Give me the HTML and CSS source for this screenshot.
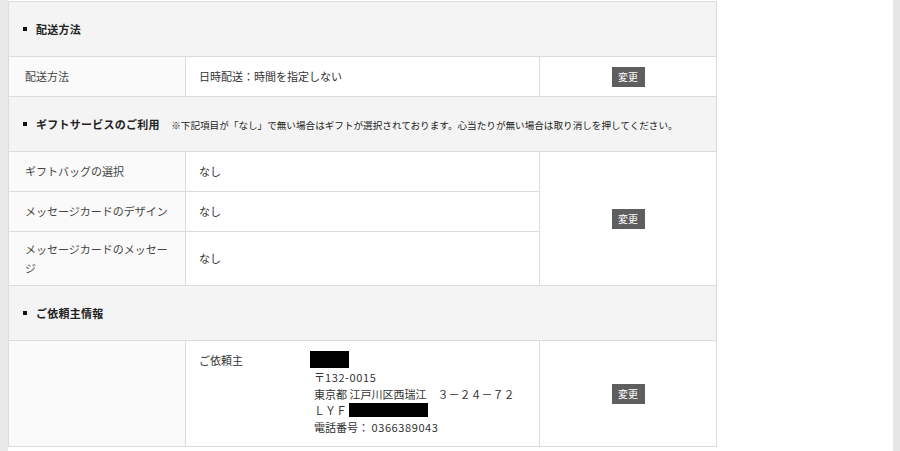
FILE: index.html
```html
<!DOCTYPE html>
<html lang="ja">
<head>
    <meta charset="UTF-8">
    <meta name="viewport" content="width=device-width, initial-scale=1.0">
    <title>ご注文内容の確認</title>
    <link rel="stylesheet" href="styles.css">
</head>
<body>
    <div class="page">
        <div class="side-left"></div>

        <div class="main">
            <table class="order-table">
                <colgroup>
                    <col class="col-label">
                    <col class="col-value">
                    <col class="col-action">
                </colgroup>

                <tr class="section-row">
                    <th colspan="3"><span class="section-title">配送方法</span></th>
                </tr>
                <tr class="item-row">
                    <td class="label">配送方法</td>
                    <td class="value">日時配送：時間を指定しない</td>
                    <td class="action"><a href="#" class="change-btn">変更</a></td>
                </tr>

                <tr class="section-row">
                    <th colspan="3">
                        <span class="section-title">ギフトサービスのご利用</span>
                        <span class="section-note">※下記項目が「なし」で無い場合はギフトが選択されております。心当たりが無い場合は取り消しを押してください。</span>
                    </th>
                </tr>
                <tr class="item-row">
                    <td class="label">ギフトバッグの選択</td>
                    <td class="value">なし</td>
                    <td class="action" rowspan="3"><a href="#" class="change-btn">変更</a></td>
                </tr>
                <tr class="item-row">
                    <td class="label">メッセージカードのデザイン</td>
                    <td class="value">なし</td>
                </tr>
                <tr class="item-row tall">
                    <td class="label">メッセージカードのメッセージ</td>
                    <td class="value">なし</td>
                </tr>

                <tr class="section-row">
                    <th colspan="3"><span class="section-title">ご依頼主情報</span></th>
                </tr>
                <tr class="item-row sender-row">
                    <td class="label"></td>
                    <td class="value">
                        <div class="sender">
                            <div class="sender-label">ご依頼主</div>
                            <div class="sender-info">
                                <div class="redact name-redact"></div>
                                <div class="addr">〒<span class="num">132-0015</span></div>
                                <div class="addr">東京都 江戸川区西瑞江　３－２４－７２</div>
                                <div class="addr">ＬＹＦ <span class="redact building-redact"></span></div>
                                <div class="addr">電話番号： <span class="num">0366389043</span></div>
                            </div>
                        </div>
                    </td>
                    <td class="action"><a href="#" class="change-btn">変更</a></td>
                </tr>
            </table>
        </div>

        <div class="side-right"></div>
    </div>
</body>
</html>
```

FILE: styles.css
```css
html, body {
    margin: 0;
    padding: 0;
    background-color: #fff;
}

body {
    font-family: "Noto Sans CJK JP", "Noto Sans", sans-serif;
    font-size: 11px;
    color: #333;
}

.page {
    display: flex;
    height: 451px;
    overflow: hidden;
}

.side-left {
    width: 8px;
    background-color: #e9e9e9;
    flex-shrink: 0;
}

.side-right {
    width: 7px;
    background-color: #e6e6e6;
    flex-shrink: 0;
}

.main {
    flex: 1;
    padding-top: 1px;
}

.order-table {
    width: 708px;
    border-collapse: collapse;
    table-layout: fixed;
}

.col-label {
    width: 177px;
}

.col-value {
    width: 354px;
}

.col-action {
    width: 177px;
}

.order-table th,
.order-table td {
    border: 1px solid #dcdcdc;
}

/* section headers */
.section-row th {
    height: 54px;
    padding: 0 0 0 14px;
    background-color: #f4f4f4;
    text-align: left;
    vertical-align: middle;
    white-space: nowrap;
}

.section-title {
    position: relative;
    padding-left: 13px;
    font-size: 11px;
    font-weight: bold;
    letter-spacing: 0.25px;
    color: #222;
}

.section-title::before {
    content: "";
    position: absolute;
    left: 0;
    top: 50%;
    width: 4px;
    height: 4px;
    margin-top: -2px;
    background-color: #111;
}

.section-note {
    margin-left: 9px;
    font-size: 9.6px;
    font-weight: normal;
    letter-spacing: 0;
    color: #222;
}

/* item rows */
.item-row td {
    height: 39px;
    padding: 0;
    vertical-align: middle;
    line-height: 19px;
}

.item-row.tall td {
    height: 53px;
}

.label {
    padding: 0 16px !important;
    background-color: #fafafa;
    color: #444;
}

.value {
    padding: 0 13px !important;
    background-color: #fff;
}

.action {
    text-align: center;
    background-color: #fff;
}

.change-btn {
    display: inline-block;
    width: 33px;
    height: 20px;
    line-height: 20px;
    background-color: #5e5e5e;
    color: #fff;
    font-size: 10px;
    text-decoration: none;
    text-align: center;
    vertical-align: middle;
}

/* sender info */
.sender-row td {
    height: 105px;
}

.sender-row .value {
    height: 95px;
    vertical-align: top;
    padding-top: 10px !important;
}

.sender {
    display: flex;
}

.sender-label {
    width: 111px;
    line-height: 17px;
    padding-top: 1px;
}

.sender-info {
    line-height: 16.7px;
}

.addr {
    padding-left: 4px;
}

.num {
    letter-spacing: 0.6px;
}

.redact {
    display: inline-block;
    background-color: #000;
    vertical-align: top;
}

.name-redact {
    display: block;
    width: 39px;
    height: 17px;
    margin-bottom: 1px;
}

.building-redact {
    width: 79px;
    height: 14px;
    margin-top: 1px;
}
```
